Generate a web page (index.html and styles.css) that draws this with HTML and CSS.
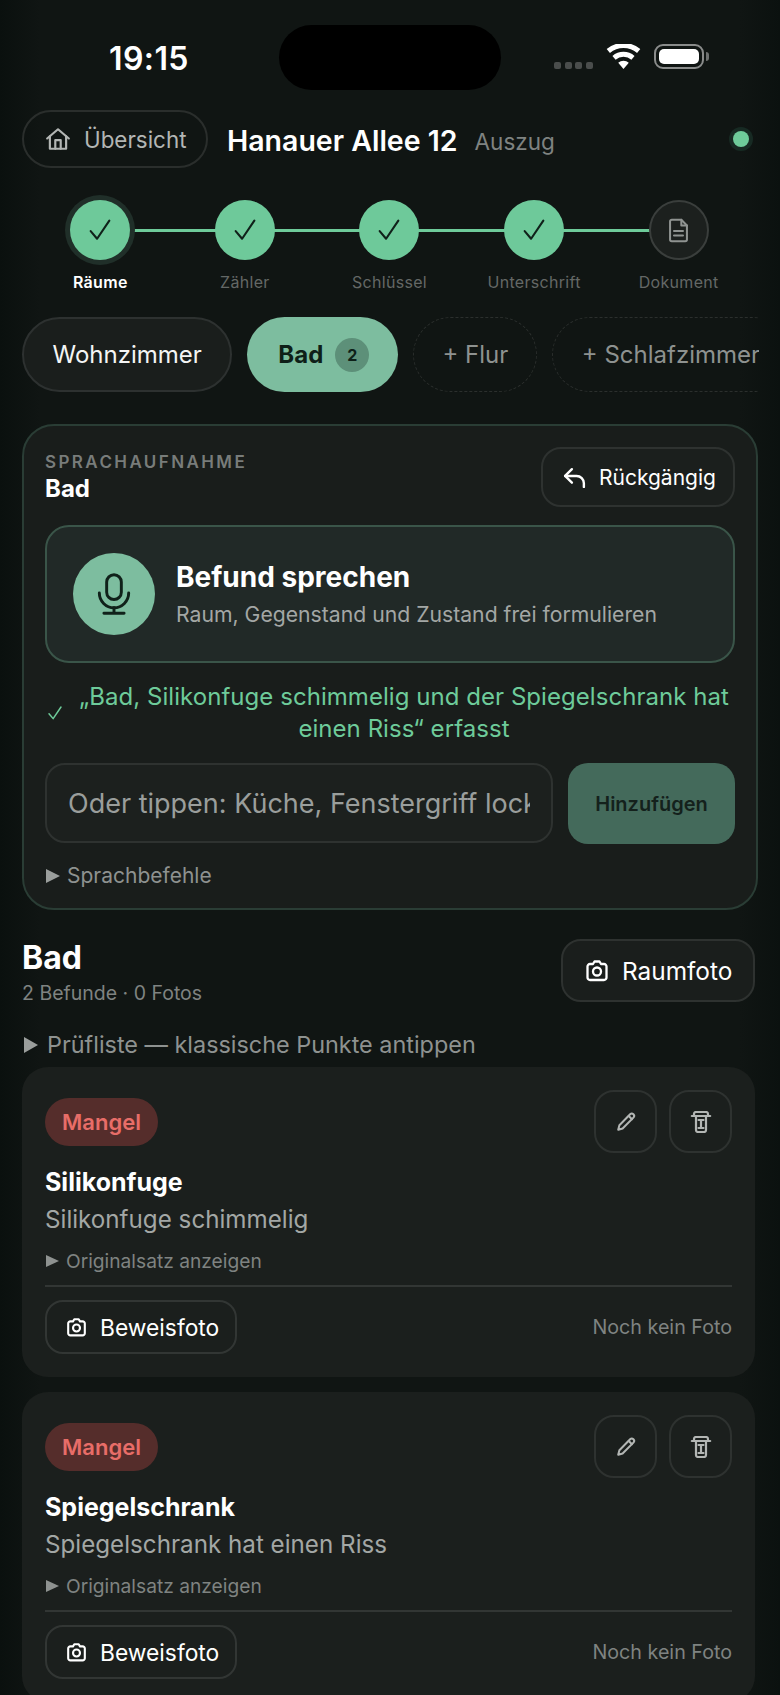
FILE: index.html
```html
<!DOCTYPE html>
<html lang="de">
<head>
    <meta charset="UTF-8">
    <meta name="viewport" content="width=device-width, initial-scale=1.0">
    <title>Hanauer Allee 12 – Auszug</title>
    <link rel="stylesheet" href="styles.css">
</head>
<body>
    <svg class="icon-defs" aria-hidden="true">
        <symbol id="i-check" viewBox="0 0 24 24"><path d="M4 13l5.500 6.500L20 4"/></symbol>
        <symbol id="i-camera" viewBox="0 0 24 24"><path d="M8 5l1.500-2.500h5L16 5h3a2.500 2.500 0 0 1 2.500 2.500v11A2.500 2.500 0 0 1 19 21H5a2.500 2.500 0 0 1-2.500-2.500v-11A2.500 2.500 0 0 1 5 5z"/><circle cx="12" cy="12.500" r="4"/></symbol>
        <symbol id="i-pencil" viewBox="0 0 24 24"><path d="M3.500 20.500l1.300-5L16.500 3.600a2.500 2.500 0 0 1 3.600 3.600L8.300 19z"/><path d="M15 5.500l3.500 3.500"/></symbol>
        <symbol id="i-trash" viewBox="0 0 20 22"><path d="M3 5V3a2 2 0 0 1 2-2h10a2 2 0 0 1 2 2v2"/><path d="M.8 5h18.400"/><path d="M5 5v14a2 2 0 0 0 2 2h6a2 2 0 0 0 2-2V5"/><path d="M7.500 9h5M10 9v8M7.500 17h5"/></symbol>
    </svg>

    <div class="page">
        <!-- Status bar -->
        <div class="status-bar">
            <div class="time">19:15</div>
            <div class="island"></div>
            <div class="status-icons">
                <div class="signal"><span></span><span></span><span></span><span></span></div>
                <svg class="wifi" viewBox="0 0 36 26"><path d="M18 26l-5.500-6.500a8.500 8.500 0 0 1 11 0z"/><path d="M9.800 16.300l-3.300-3.900a17.500 17.500 0 0 1 23 0l-3.300 3.900a12.500 12.500 0 0 0-16.400 0z"/><path d="M3.900 9.300L.5 5.300a27 27 0 0 1 35 0l-3.400 4a22 22 0 0 0-28.200 0z"/></svg>
                <div class="battery"><div class="battery-fill"></div></div>
            </div>
        </div>

        <main class="content">
            <!-- Header -->
            <header class="top-row">
                <button class="back-pill">
                    <svg class="stroke-icon back-icon" viewBox="0 0 24 24"><path d="M2 11.500L12 3l10 8.500"/><path d="M4.500 9.500V21h15V9.500"/><path d="M9.500 21v-8h5v8"/></svg>
                    Übersicht
                </button>
                <h1 class="address">Hanauer Allee 12</h1>
                <span class="mode">Auszug</span>
                <span class="online-dot"></span>
            </header>

            <!-- Steps -->
            <ol class="stepper">
                <li class="step step-current">
                    <span class="step-circle"><svg class="stroke-icon"><use href="#i-check"/></svg></span>
                    <span class="step-label">Räume</span>
                </li>
                <li class="step">
                    <span class="step-circle"><svg class="stroke-icon"><use href="#i-check"/></svg></span>
                    <span class="step-label">Zähler</span>
                </li>
                <li class="step">
                    <span class="step-circle"><svg class="stroke-icon"><use href="#i-check"/></svg></span>
                    <span class="step-label">Schlüssel</span>
                </li>
                <li class="step">
                    <span class="step-circle"><svg class="stroke-icon"><use href="#i-check"/></svg></span>
                    <span class="step-label">Unterschrift</span>
                </li>
                <li class="step step-todo">
                    <span class="step-circle"><svg class="stroke-icon" viewBox="0 0 24 24"><path d="M14.500 2.500H6a1.500 1.500 0 0 0-1.500 1.500v16A1.500 1.500 0 0 0 6 21.500h12a1.500 1.500 0 0 0 1.500-1.500V7.500z"/><path d="M14.500 2.500v5h5"/><path d="M8 12.500h8M8 16.500h8"/></svg></span>
                    <span class="step-label">Dokument</span>
                </li>
            </ol>

            <!-- Rooms -->
            <div class="room-tabs">
                <div class="room-tab">Wohnzimmer</div>
                <div class="room-tab room-tab-active">Bad <span class="room-count">2</span></div>
                <div class="room-tab room-tab-add room-tab-flur">+ Flur</div>
                <div class="room-tab room-tab-add">+ Schlafzimmer</div>
            </div>

            <!-- Voice card -->
            <section class="voice-card">
                <div class="voice-head">
                    <div>
                        <div class="voice-kicker">SPRACHAUFNAHME</div>
                        <div class="voice-room">Bad</div>
                    </div>
                    <button class="undo-button">
                        <svg class="stroke-icon" viewBox="0 0 24 24"><path d="M9.500 4L3 10.500 9.500 17"/><path d="M3 10.500h11a7 7 0 0 1 7 7V21"/></svg>
                        Rückgängig
                    </button>
                </div>

                <div class="speak-box">
                    <div class="mic-circle">
                        <svg class="stroke-icon" viewBox="0 0 24 24"><rect x="8" y="1.500" width="8" height="13.500" rx="4"/><path d="M4 11.500a8 8 0 0 0 16 0"/><path d="M12 19.500v3M6.500 22.500h11"/></svg>
                    </div>
                    <div class="speak-text">
                        <div class="speak-title">Befund sprechen</div>
                        <div class="speak-sub">Raum, Gegenstand und Zustand frei formulieren</div>
                    </div>
                </div>

                <div class="confirm-row">
                    <svg class="stroke-icon confirm-check"><use href="#i-check"/></svg>
                    <p class="confirm-text">„Bad, Silikonfuge schimmelig und der Spiegelschrank hat einen Riss“ erfasst</p>
                </div>

                <div class="type-row">
                    <input class="type-input" type="text" placeholder="Oder tippen: Küche, Fenstergriff locker">
                    <button class="add-button">Hinzufügen</button>
                </div>

                <div class="disclosure voice-help"><span class="triangle"></span>Sprachbefehle</div>
            </section>

            <!-- Room section -->
            <div class="section-head">
                <div>
                    <h2 class="section-title">Bad</h2>
                    <div class="section-sub">2 Befunde · 0 Fotos</div>
                </div>
                <button class="room-photo">
                    <svg class="stroke-icon"><use href="#i-camera"/></svg>
                    Raumfoto
                </button>
            </div>

            <div class="disclosure checklist"><span class="triangle"></span>Prüfliste — klassische Punkte antippen</div>

            <article class="finding">
                <div class="finding-top">
                    <span class="badge">Mangel</span>
                    <div class="finding-actions">
                        <button class="icon-button"><svg class="stroke-icon"><use href="#i-pencil"/></svg></button>
                        <button class="icon-button"><svg class="stroke-icon"><use href="#i-trash"/></svg></button>
                    </div>
                </div>
                <h3 class="finding-title">Silikonfuge</h3>
                <p class="finding-text">Silikonfuge schimmelig</p>
                <div class="disclosure original"><span class="triangle"></span>Originalsatz anzeigen</div>
                <div class="finding-foot">
                    <button class="proof-button"><svg class="stroke-icon"><use href="#i-camera"/></svg>Beweisfoto</button>
                    <span class="no-photo">Noch kein Foto</span>
                </div>
            </article>

            <article class="finding">
                <div class="finding-top">
                    <span class="badge">Mangel</span>
                    <div class="finding-actions">
                        <button class="icon-button"><svg class="stroke-icon"><use href="#i-pencil"/></svg></button>
                        <button class="icon-button"><svg class="stroke-icon"><use href="#i-trash"/></svg></button>
                    </div>
                </div>
                <h3 class="finding-title">Spiegelschrank</h3>
                <p class="finding-text">Spiegelschrank hat einen Riss</p>
                <div class="disclosure original"><span class="triangle"></span>Originalsatz anzeigen</div>
                <div class="finding-foot">
                    <button class="proof-button"><svg class="stroke-icon"><use href="#i-camera"/></svg>Beweisfoto</button>
                    <span class="no-photo">Noch kein Foto</span>
                </div>
            </article>
        </main>
    </div>
</body>
</html>
```

FILE: styles.css
```css
* {
    box-sizing: border-box;
}

html, body {
    margin: 0;
    height: 1695px;
    overflow: hidden;
}

body {
    font-family: Inter, "Liberation Sans", sans-serif;
    color: #fff;
    background-color: #0f1412;
}

button, input {
    font-family: inherit;
    background: none;
    color: inherit;
    margin: 0;
}

h1, h2, h3, p, ol {
    margin: 0;
    padding: 0;
}

.icon-defs {
    display: none;
}

.stroke-icon {
    fill: none;
    stroke: currentColor;
    stroke-width: 2;
    stroke-linecap: round;
    stroke-linejoin: round;
    flex-shrink: 0;
}

.page {
    height: 1695px;
    overflow: hidden;
    background: linear-gradient(90deg, #0a100e 0, #101513 40px, #101513 740px, #0b110f 100%);
}

/* Status bar */
.status-bar {
    height: 110px;
    padding: 25px 0 0 109px;
    display: flex;
    align-items: flex-start;
}

.time {
    width: 170px;
    margin-top: 17px;
    font-size: 32px;
    line-height: 34px;
    font-weight: 600;
    letter-spacing: 0.4px;
}

.island {
    width: 222px;
    height: 65px;
    border-radius: 33px;
    background-color: #000;
}

.status-icons {
    margin-left: 53px;
    margin-top: 19px;
    display: flex;
    align-items: flex-end;
}

.signal {
    display: flex;
    gap: 3.500px;
}

.signal span {
    width: 7px;
    height: 7px;
    border-radius: 2px;
    background-color: #4a4d4c;
}

.wifi {
    width: 35px;
    height: 25px;
    margin-left: 13px;
    fill: #fff;
}

.battery {
    position: relative;
    width: 50px;
    height: 25px;
    margin-left: 13px;
    padding: 3px;
    border: 2px solid #8a8c8b;
    border-radius: 9px;
}

.battery::after {
    content: "";
    position: absolute;
    right: -7px;
    top: 6px;
    width: 3px;
    height: 9px;
    border-radius: 0 3px 3px 0;
    background-color: #6e7170;
}

.battery-fill {
    height: 100%;
    border-radius: 5px;
    background-color: #fff;
}

/* Main column */
.content {
    padding: 0 22px;
}

.top-row {
    display: flex;
    align-items: center;
    height: 58px;
}

.back-pill {
    display: flex;
    align-items: center;
    gap: 13px;
    width: 186px;
    height: 58px;
    padding: 0 0 0 21px;
    border: 2px solid #2a2e2c;
    border-radius: 29px;
    color: #b3b6b4;
    font-size: 22.400px;
    white-space: nowrap;
}

.back-icon {
    width: 26px;
    height: 26px;
}

.address {
    margin-left: 19px;
    margin-top: 3px;
    font-size: 28.500px;
    font-weight: 600;
    white-space: nowrap;
}

.mode {
    margin-left: 17px;
    margin-top: 5px;
    font-size: 22.500px;
    color: #7f8381;
}

.online-dot {
    width: 16px;
    height: 16px;
    margin-left: auto;
    margin-right: 9px;
    border-radius: 50%;
    background-color: #6ecb9a;
    box-shadow: 0 0 0 4px #172a23;
}

/* Stepper */
.stepper {
    list-style: none;
    display: flex;
    margin: 32px 0 0 6px;
}

.step {
    position: relative;
    width: 144.600px;
    display: flex;
    flex-direction: column;
    align-items: center;
    flex-shrink: 0;
}

.step:not(:last-child)::after {
    content: "";
    position: absolute;
    left: 72px;
    top: 28.500px;
    width: 146px;
    height: 3px;
    background-color: #6ecb9a;
}

.step-circle {
    position: relative;
    z-index: 1;
    width: 60px;
    height: 60px;
    border-radius: 50%;
    display: flex;
    align-items: center;
    justify-content: center;
    background-color: #6ec99a;
    color: #10211a;
}

.step-circle svg {
    width: 28px;
    height: 28px;
    stroke-width: 1.800;
}

.step-current .step-circle {
    box-shadow: 0 0 0 5px #202f29;
}

.step-todo .step-circle {
    background-color: #1c201e;
    border: 2px solid #3a3e3c;
    color: #8f9391;
}

.step-todo .step-circle svg {
    width: 27px;
    height: 27px;
}

.step-label {
    margin-top: 12px;
    font-size: 16px;
    line-height: 20px;
    letter-spacing: 0.3px;
    color: #646866;
    white-space: nowrap;
}

.step-current .step-label {
    color: #fff;
    font-weight: 600;
}

/* Room tabs */
.room-tabs {
    display: flex;
    gap: 15px;
    width: 737px;
    margin-top: 25px;
    overflow: hidden;
}

.room-tab {
    flex-shrink: 0;
    height: 75px;
    padding: 0 28.500px;
    border: 2px solid #2d3130;
    border-radius: 38px;
    display: flex;
    align-items: center;
    background-color: #1a1e1c;
    font-size: 24px;
    white-space: nowrap;
    color: #f4f5f4;
}

.room-tab-active {
    width: 151px;
    padding: 0 0 0 31px;
    border: none;
    gap: 12px;
    background-color: #7dbd9f;
    color: #0e1f18;
    font-weight: 700;
}

.room-count {
    width: 34px;
    height: 34px;
    border-radius: 50%;
    display: flex;
    align-items: center;
    justify-content: center;
    background-color: #5d9079;
    font-size: 16px;
}

.room-tab-add {
    background: none;
    border: 1.500px dashed #2b2f2d;
    color: #8e9290;
}

.room-tab-flur {
    width: 124px;
    padding: 0;
    justify-content: center;
}

/* Voice card */
.voice-card {
    margin-top: 32px;
    height: 486px;
    padding: 21px 21px 0;
    border: 2px solid #2a3d35;
    border-radius: 32px;
    background-color: #191d1b;
}

.voice-head {
    display: flex;
    justify-content: space-between;
    height: 78px;
}

.voice-kicker {
    margin-top: 4px;
    font-size: 17px;
    line-height: 22px;
    font-weight: 600;
    letter-spacing: 2.400px;
    color: #787c7a;
}

.voice-room {
    margin-top: 1px;
    font-size: 24px;
    line-height: 30px;
    font-weight: 700;
}

.undo-button {
    display: flex;
    align-items: center;
    gap: 12px;
    height: 60px;
    width: 194px;
    padding: 0 0 0 19px;
    border: 2px solid #2e3230;
    border-radius: 20px;
    font-size: 21px;
    background-color: #1b1f1d;
}

.undo-button svg {
    width: 25px;
    height: 25px;
    stroke-width: 2.300;
}

.speak-box {
    display: flex;
    align-items: center;
    gap: 21px;
    height: 138px;
    padding-left: 26px;
    border: 2px solid #3a5549;
    border-radius: 24px;
    background-color: #212927;
}

.mic-circle {
    width: 82px;
    height: 82px;
    border-radius: 50%;
    display: flex;
    align-items: center;
    justify-content: center;
    background-color: #7dbd9f;
    color: #10211a;
}

.mic-circle svg {
    width: 44px;
    height: 44px;
    stroke-width: 1.600;
}

.speak-text {
    padding-bottom: 2px;
}

.speak-title {
    font-size: 28px;
    line-height: 36px;
    font-weight: 700;
}

.speak-sub {
    margin-top: 6px;
    font-size: 21.200px;
    line-height: 26px;
    color: #a3a7a5;
}

.confirm-row {
    display: flex;
    align-items: center;
    margin-top: 18px;
    height: 64px;
}

.confirm-check {
    width: 18px;
    height: 18px;
    margin-left: 1px;
    color: #6ecb9a;
}

.confirm-text {
    width: 656px;
    margin-left: 12px;
    font-size: 24px;
    line-height: 32px;
    letter-spacing: 0.05px;
    text-align: center;
    color: #6ecb9a;
}

.type-row {
    display: flex;
    gap: 15px;
    margin-top: 18px;
}

.type-input {
    width: 508px;
    height: 80px;
    padding: 0 21px;
    border: 2px solid #2e3230;
    border-radius: 20px;
    background-color: #1c201e;
    font-size: 27px;
    outline: none;
}

.type-input::placeholder {
    color: #9a9e9c;
    opacity: 1;
}

.add-button {
    width: 167px;
    height: 81px;
    border: none;
    border-radius: 20px;
    background-color: #446a5b;
    color: #14211c;
    font-size: 20px;
    font-weight: 600;
}

.disclosure {
    display: flex;
    align-items: center;
    white-space: nowrap;
}

.triangle {
    width: 0;
    height: 0;
    flex-shrink: 0;
    border-style: solid;
    border-color: transparent transparent transparent #9a9e9c;
}

.voice-help {
    margin-top: 19px;
    padding-left: 1px;
    font-size: 21px;
    line-height: 26px;
    color: #8e9290;
}

.voice-help .triangle {
    border-width: 7px 0 7px 14px;
    margin-right: 7px;
}

/* Room section */
.section-head {
    display: flex;
    justify-content: space-between;
    width: 733px;
    margin-top: 29px;
}

.section-title {
    font-size: 32px;
    line-height: 38px;
    font-weight: 700;
}

.section-sub {
    margin-top: 4px;
    font-size: 19.500px;
    line-height: 24px;
    color: #7f8381;
}

.room-photo {
    display: flex;
    align-items: center;
    gap: 13px;
    width: 194px;
    height: 63px;
    padding: 0 0 0 22px;
    border: 2px solid #2e3230;
    border-radius: 20px;
    background-color: #1a1e1c;
    font-size: 24.400px;
}

.room-photo svg {
    width: 24px;
    height: 24px;
    stroke-width: 2.300;
}

.checklist {
    margin-top: 25px;
    padding-left: 2px;
    font-size: 23.400px;
    line-height: 30px;
    color: #8e9290;
}

.checklist .triangle {
    border-width: 8px 0 8px 14px;
    margin-right: 9px;
}

/* Findings */
.finding {
    width: 733px;
    height: 310px;
    margin-top: 7px;
    margin-bottom: 15px;
    padding: 23px 23px 0;
    border-radius: 26px;
    background-color: #1b1f1d;
}

.finding + .finding {
    margin-top: 0;
}

.finding-top {
    display: flex;
    justify-content: space-between;
    height: 63px;
}

.badge {
    margin-top: 8px;
    width: 113px;
    height: 48px;
    border-radius: 24px;
    display: flex;
    align-items: center;
    justify-content: center;
    background-color: #552d2b;
    color: #e86d68;
    font-size: 22px;
    font-weight: 600;
}

.finding-actions {
    display: flex;
    gap: 12px;
}

.icon-button {
    width: 63px;
    height: 63px;
    padding: 0;
    border: 2px solid #2e3230;
    border-radius: 20px;
    display: flex;
    align-items: center;
    justify-content: center;
    color: #b3b6b4;
    stroke-width: 2.300;
}

.icon-button svg {
    width: 22px;
    height: 22px;
    stroke-width: 2.200;
}

.finding-title {
    margin-top: 13px;
    font-size: 25px;
    line-height: 32px;
    font-weight: 700;
}

.finding-text {
    margin-top: 6px;
    font-size: 24.200px;
    line-height: 32px;
    color: #a3a7a5;
}

.original {
    margin-top: 13px;
    padding-left: 1px;
    font-size: 19.200px;
    line-height: 24px;
    color: #7f8381;
}

.original .triangle {
    border-width: 6.500px 0 6.500px 13px;
    margin-right: 7px;
    border-left-color: #8e9290;
}

.finding-foot {
    display: flex;
    align-items: center;
    justify-content: space-between;
    margin-top: 12px;
    padding-top: 13px;
    border-top: 2px solid #323634;
}

.proof-button {
    display: flex;
    align-items: center;
    gap: 13px;
    width: 192px;
    height: 54px;
    padding: 0 0 0 19px;
    border: 2px solid #323634;
    border-radius: 18px;
    font-size: 22.800px;
}

.proof-button svg {
    width: 21px;
    height: 21px;
    stroke-width: 2.400;
}

.no-photo {
    font-size: 19.700px;
    color: #7f8381;
}
```
